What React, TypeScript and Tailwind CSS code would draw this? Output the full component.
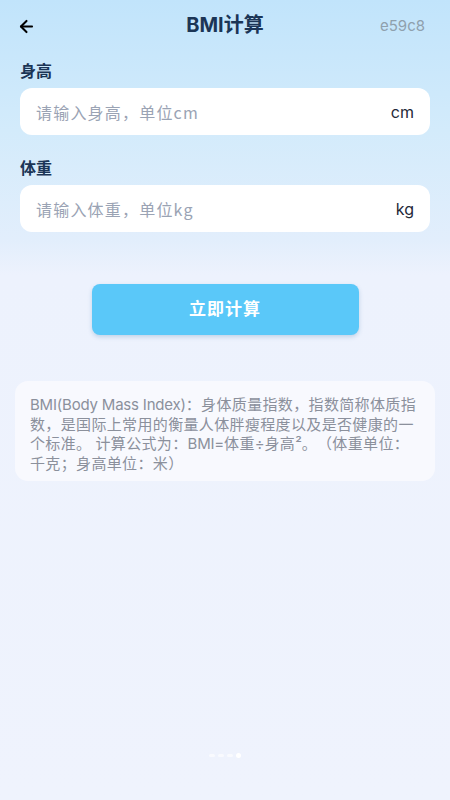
import React, { useState } from 'react';
import { ArrowLeft } from 'lucide-react';

const font = { fontFamily: 'Inter, "Noto Sans CJK SC", sans-serif' };

const INFO =
  'BMI(Body Mass Index)：身体质量指数，指数简称体质指数，是国际上常用的衡量人体胖瘦程度以及是否健康的一个标准。 计算公式为：BMI=体重÷身高²。（体重单位：千克；身高单位：米）';

// CJK runs (with their full-width punctuation) take the CJK font, Latin runs keep Inter
const Mixed: React.FC<{ text: string }> = ({ text }) => (
  <>
    {text.match(/[\u3000-\u303f\u4e00-\u9fff\uff00-\uffef]+|[^\u3000-\u303f\u4e00-\u9fff\uff00-\uffef]+/g)!.map((part, i) =>
      /[\u3000-\u303f\u4e00-\u9fff\uff00-\uffef]/.test(part) ? (
        <span key={i} className="font-['Noto_Sans_CJK_SC',sans-serif] tracking-[0.35px]">
          {part}
        </span>
      ) : (
        <span key={i} className="tracking-[-0.2px]">
          {part}
        </span>
      )
    )}
  </>
);

const App: React.FC = () => {
  const [height, setHeight] = useState('');
  const [weight, setWeight] = useState('');

  return (
    <div
      className="min-h-[800px] w-[450px] bg-[linear-gradient(180deg,#c1e4fb_0px,#d3ebfb_130px,#e2eefc_240px,#edf2fd_275px,#eff3fd_800px)] flex flex-col relative [text-spacing-trim:space-all]"
      style={font}
    >
      {/* header */}
      <div className="h-[52px] flex items-center justify-between px-[17px] relative">
        <button className="text-black">
          <ArrowLeft size={19} strokeWidth={2.6} />
        </button>
        <h1 className="absolute left-1/2 -translate-x-1/2 top-[10px] text-[20px] font-bold text-[#1b3556]">
          BMI计算
        </h1>
        <span className="text-[15px] text-[#8fa0ad] pr-[8px]">e59c8</span>
      </div>

      {/* form */}
      <div className="px-[20px] mt-[7px]">
        <label className="block text-[16px] font-bold text-[#1b3556] leading-[24px]">身高</label>
        <div className="mt-[5px] h-[47px] bg-white rounded-[12px] flex items-center px-[16px]">
          <input
            value={height}
            onChange={(e) => setHeight(e.target.value)}
            placeholder="请输入身高，单位cm"
            className="flex-1 bg-transparent outline-none text-[16px] tracking-[1.2px] text-[#1f2937] placeholder:text-[#9aa3b4] font-['Noto_Sans_CJK_SC',sans-serif]"
          />
          <span className="text-[16px] text-[#1f2937]">cm</span>
        </div>

        <label className="block text-[16px] font-bold text-[#1b3556] leading-[24px] mt-[21px]">体重</label>
        <div className="mt-[5px] h-[47px] bg-white rounded-[12px] flex items-center px-[16px]">
          <input
            value={weight}
            onChange={(e) => setWeight(e.target.value)}
            placeholder="请输入体重，单位kg"
            className="flex-1 bg-transparent outline-none text-[16px] tracking-[1.2px] text-[#1f2937] placeholder:text-[#9aa3b4] font-['Noto_Sans_CJK_SC',sans-serif]"
          />
          <span className="text-[16px] text-[#1f2937]">kg</span>
        </div>
      </div>

      {/* button */}
      <div className="flex justify-center mt-[52px]">
        <button className="w-[267px] h-[51px] rounded-[8px] bg-[#5ac8f9] text-white text-[17px] font-bold tracking-[1px] shadow-[0_2px_4px_rgba(60,120,170,0.25)]">
          立即计算
        </button>
      </div>

      {/* info */}
      <div className="mx-[15px] mt-[46px] rounded-[13px] bg-[#f8f9fe] pl-[15px] pr-[13px] pt-[14px] pb-[8px]">
        <p className="text-[15px] leading-[18.5px] text-[#8b909c] [text-spacing-trim:space-all]">
          <Mixed text={INFO} />
        </p>
      </div>

      {/* page dots */}
      <div className="absolute left-1/2 -translate-x-1/2 top-[753px] flex items-center gap-[3px]">
        <span className="w-[6px] h-[3px] rounded-full bg-white/60" />
        <span className="w-[6px] h-[3px] rounded-full bg-white/60" />
        <span className="w-[6px] h-[3px] rounded-full bg-white/60" />
        <span className="w-[5px] h-[5px] rounded-full bg-white" />
      </div>
    </div>
  );
};

export default App;
